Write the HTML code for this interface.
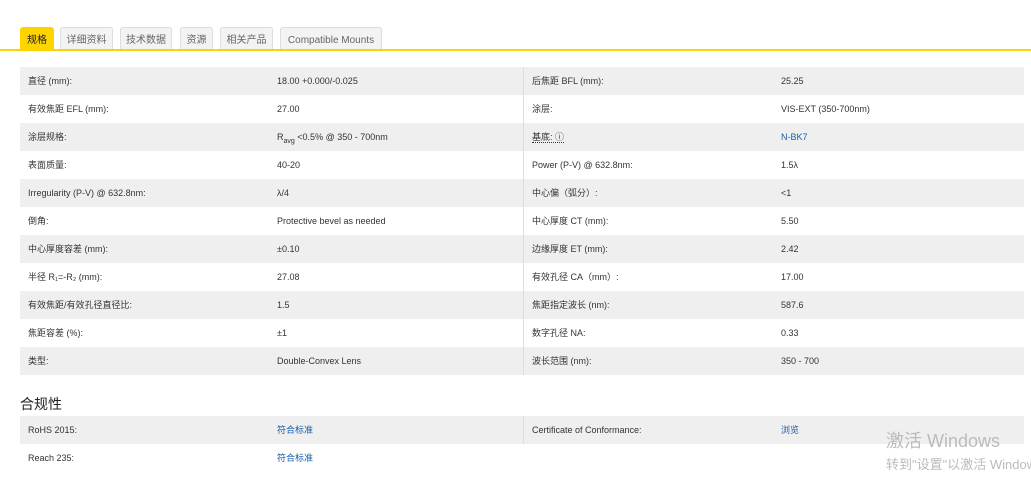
<!DOCTYPE html>
<html><head><meta charset="utf-8"><style>
body{margin:0;width:1031px;height:492px;background:#fff;font-family:"Liberation Sans","Noto Sans CJK SC",sans-serif;color:#333;position:relative;overflow:hidden}
.tab{position:absolute;top:27px;height:23px;box-sizing:border-box;border:1px solid #ddd;border-bottom:none;background:#f3f3f3;border-radius:3px 3px 0 0;font-size:10px;color:#666;text-align:center;line-height:25px}
.tab.on{background:#fdd400;border-color:#fdd400;color:#222}
.line{position:absolute;top:49px;left:0;width:1031px;height:2px;background:#fdd400}
table{position:absolute;left:20px;border-collapse:collapse;width:1004px;font-size:9px;table-layout:fixed}
td{height:28px;padding:0;line-height:28px;white-space:nowrap;overflow:hidden;vertical-align:top}
tr:nth-child(odd) td{background:#efefef}
td.l1{padding-left:8px;width:249px}
td.v1{width:246px;border-right:1px solid #ddd}
td.l2{padding-left:8px;width:249px}
sub{line-height:0;font-size:7px}
a{color:#1a5fa8;text-decoration:none}
h3{position:absolute;left:20px;top:394px;margin:0;font-size:14px;font-weight:normal;color:#222}
.wm{position:absolute;left:886px;color:#bbb}
</style></head><body>
<div class="tab on" style="left:20px;width:34px">规格</div>
<div class="tab" style="left:60px;width:53px">详细资料</div>
<div class="tab" style="left:120px;width:52px">技术数据</div>
<div class="tab" style="left:180px;width:33px">资源</div>
<div class="tab" style="left:220px;width:53px">相关产品</div>
<div class="tab" style="left:280px;width:102px">Compatible Mounts</div>
<div class="line"></div>
<table style="top:67px">
<tr><td class="l1">直径 (mm):</td><td class="v1">18.00 +0.000/-0.025</td><td class="l2">后焦距 BFL (mm):</td><td>25.25</td></tr>
<tr><td class="l1">有效焦距 EFL (mm):</td><td class="v1">27.00</td><td class="l2">涂层:</td><td>VIS-EXT (350-700nm)</td></tr>
<tr><td class="l1">涂层规格:</td><td class="v1">R<sub>avg</sub> &lt;0.5% @ 350 - 700nm</td><td class="l2"><span style="border-bottom:1px dotted #333">基底: ⓘ</span></td><td><a>N-BK7</a></td></tr>
<tr><td class="l1">表面质量:</td><td class="v1">40-20</td><td class="l2">Power (P-V) @ 632.8nm:</td><td>1.5λ</td></tr>
<tr><td class="l1">Irregularity (P-V) @ 632.8nm:</td><td class="v1">λ/4</td><td class="l2">中心偏（弧分）:</td><td>&lt;1</td></tr>
<tr><td class="l1">倒角:</td><td class="v1">Protective bevel as needed</td><td class="l2">中心厚度 CT (mm):</td><td>5.50</td></tr>
<tr><td class="l1">中心厚度容差 (mm):</td><td class="v1">±0.10</td><td class="l2">边缘厚度 ET (mm):</td><td>2.42</td></tr>
<tr><td class="l1">半径 R₁=-R₂ (mm):</td><td class="v1">27.08</td><td class="l2">有效孔径 CA（mm）:</td><td>17.00</td></tr>
<tr><td class="l1">有效焦距/有效孔径直径比:</td><td class="v1">1.5</td><td class="l2">焦距指定波长 (nm):</td><td>587.6</td></tr>
<tr><td class="l1">焦距容差 (%):</td><td class="v1">±1</td><td class="l2">数字孔径 NA:</td><td>0.33</td></tr>
<tr><td class="l1">类型:</td><td class="v1">Double-Convex Lens</td><td class="l2">波长范围 (nm):</td><td>350 - 700</td></tr>
</table>
<h3>合规性</h3>
<table style="top:416px">
<tr><td class="l1">RoHS 2015:</td><td class="v1"><a>符合标准</a></td><td class="l2">Certificate of Conformance:</td><td><a>浏览</a></td></tr>
<tr><td class="l1">Reach 235:</td><td class="v1" style="border-right:none"><a>符合标准</a></td><td class="l2"></td><td></td></tr>
</table>
<div class="wm" style="top:427px;font-size:18px">激活 Windows</div>
<div class="wm" style="top:454px;font-size:13px;white-space:nowrap">转到"设置"以激活 Windows</div>
</body></html>
